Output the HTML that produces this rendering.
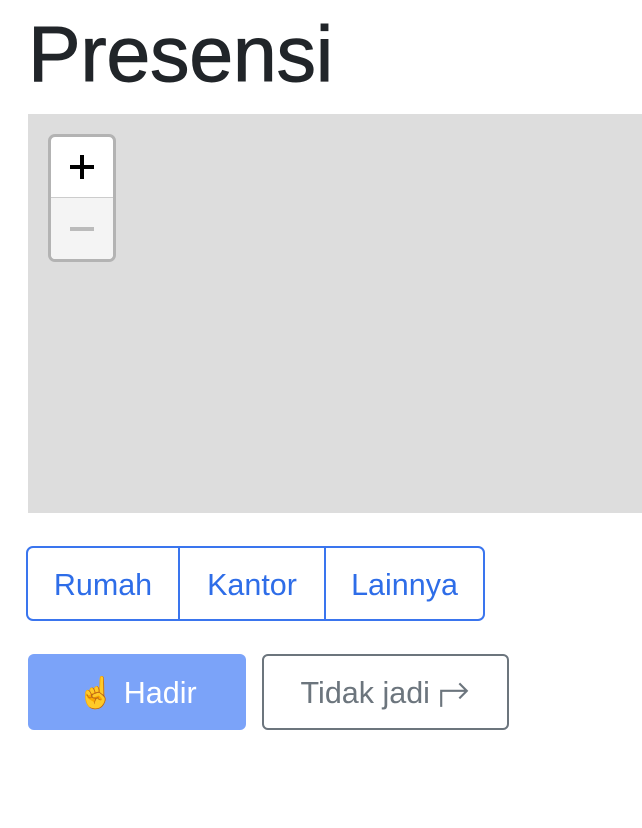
<!DOCTYPE html>
<html><head><meta charset="utf-8"><style>
body{margin:0;background:#fff;font-family:"Liberation Sans",sans-serif;width:642px;height:828px;overflow:hidden;position:relative}
h1{position:absolute;left:28px;top:8px;margin:0;font-size:79px;font-weight:400;color:#212529;line-height:92px;letter-spacing:-0.3px;-webkit-text-stroke:0.9px #212529}
.map{position:absolute;left:28px;top:114px;width:614px;height:399px;background:#dddddd}
.zoom{position:absolute;left:48px;top:134px;width:62px;height:122px;border:3px solid #b3b3b3;border-radius:7px;overflow:hidden;background:#fff}
.zoom div{height:61px;display:flex;align-items:center;justify-content:center}
.zoom .p{border-bottom:1px solid #ccc;height:60px}
.zoom .m{background:#f4f4f4}
.grp{position:absolute;left:26px;top:546px;height:71px;border:2px solid #3a75ee;border-radius:7px;display:flex}
.grp div{display:flex;align-items:center;justify-content:center;font-size:30.5px;color:#2e6de8;padding-top:3px;box-sizing:border-box}
.grp div+div{border-left:2px solid #3a75ee}
.btn{position:absolute;top:654px;height:76px;border-radius:6px;display:flex;align-items:center;justify-content:center;font-size:30.5px;box-sizing:border-box;padding-top:2px}
</style></head><body>
<h1>Presensi</h1>
<div class="map"></div>
<div class="zoom">
 <div class="p"><svg width="26" height="26"><path d="M13 1V25M1 13H25" stroke="#000" stroke-width="4"/></svg></div>
 <div class="m"><svg width="26" height="6"><path d="M1 3H25" stroke="#bbb" stroke-width="4"/></svg></div>
</div>
<div class="grp">
 <div style="width:150px">Rumah</div>
 <div style="width:146px">Kantor</div>
 <div style="width:159px">Lainnya</div>
</div>
<div class="btn" style="left:28px;width:218px;background:#7ba3f9;color:#fff">☝️&nbsp;Hadir</div>
<div class="btn" style="left:262px;width:247px;border:2px solid #6c757d;color:#6c757d">Tidak jadi&nbsp;<svg width="32" height="30" viewBox="0 0 30 28"><path d="M3 27V12H27M20 5L27 12L20 19" fill="none" stroke="#6c757d" stroke-width="2"/></svg></div>
</body></html>
